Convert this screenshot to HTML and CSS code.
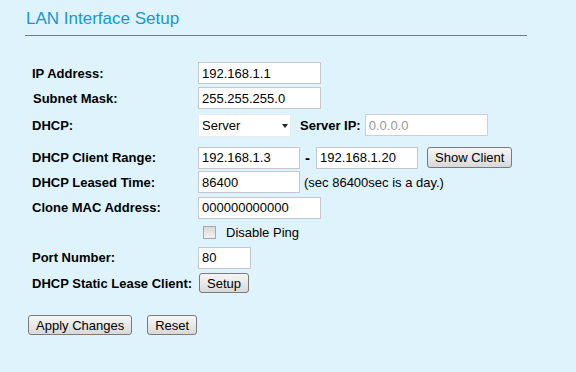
FILE: index.html
```
<!DOCTYPE html>
<html lang="en">
  <head>
    <meta charset="UTF-8" />
    <title>LAN Interface Setup</title>
    <link rel="stylesheet" href="styles.css">
  </head>
  <body>
    <h1 class="page-title">LAN Interface Setup</h1>

    <form id="lanForm">
      <table class="setup-table">
        <tr class="row-ip">
          <td class="label">IP Address:</td>
          <td><input type="text" class="field field-wide" value="192.168.1.1" /></td>
        </tr>
        <tr class="row-mask">
          <td class="label label-shift">Subnet Mask:</td>
          <td><input type="text" class="field field-wide" value="255.255.255.0" /></td>
        </tr>
        <tr class="row-dhcp">
          <td class="label">DHCP:</td>
          <td>
            <div class="inline">
              <span class="select-wrap">
                <select class="select">
                  <option>Server</option>
                  <option>Client</option>
                  <option>Disabled</option>
                </select>
              </span>
              <span class="label inline-label">Server IP:</span>
              <input type="text" class="field field-wide" value="0.0.0.0" disabled />
            </div>
          </td>
        </tr>
        <tr class="row-range">
          <td class="label">DHCP Client Range:</td>
          <td>
            <div class="inline">
              <input type="text" class="field field-mid" value="192.168.1.3" />
              <span class="dash">-</span>
              <input type="text" class="field field-mid" value="192.168.1.20" />
              <button type="button" class="btn btn-show">Show Client</button>
            </div>
          </td>
        </tr>
        <tr class="row-lease">
          <td class="label">DHCP Leased Time:</td>
          <td>
            <div class="inline">
              <input type="text" class="field field-mid" value="86400" />
              <span class="note">(sec 86400sec is a day.)</span>
            </div>
          </td>
        </tr>
        <tr class="row-mac">
          <td class="label">Clone MAC Address:</td>
          <td><input type="text" class="field field-wide" value="000000000000" /></td>
        </tr>
        <tr class="row-ping">
          <td></td>
          <td>
            <label class="check"><input type="checkbox" class="checkbox" /> Disable Ping</label>
          </td>
        </tr>
        <tr class="row-port">
          <td class="label">Port Number:</td>
          <td><input type="text" class="field field-short" value="80" /></td>
        </tr>
        <tr class="row-static">
          <td class="label">DHCP Static Lease Client:</td>
          <td><button type="button" class="btn btn-setup">Setup</button></td>
        </tr>
      </table>

      <div class="actions">
        <button type="submit" class="btn">Apply Changes</button>
        <button type="reset" class="btn">Reset</button>
      </div>
    </form>
  </body>
</html>
```

FILE: styles.css
```
* {
  box-sizing: border-box;
  margin: 0;
  padding: 0;
}

body {
  font-family: "Liberation Sans", Arial, sans-serif;
  font-size: 13px;
  color: #000;
  background-color: #dff3fc;
  padding: 9px 50px 0 25px;
}

.page-title {
  font-size: 17px;
  font-weight: normal;
  color: #1a96d4;
  padding-left: 1px;
  padding-bottom: 7px;
  border-bottom: 1px solid #6f7f89;
  width: 502px;
  line-height: 19px;
}

form {
  padding: 25px 0 0 7px;
}

.setup-table {
  border-collapse: collapse;
}

.setup-table td {
  padding: 0;
  vertical-align: middle;
}

.setup-table td:first-child {
  width: 166px;
}

.row-ip { height: 24px; }
.row-mask { height: 26px; }
.row-dhcp { height: 28px; }
.row-range { height: 30px; }
.row-range td { padding-top: 7px; }
.row-lease { height: 26px; }
.row-mac { height: 25px; }
.row-ping { height: 25px; }
.row-port { height: 25px; }
.row-static { height: 26px; }

.label {
  font-weight: bold;
  white-space: nowrap;
}

.label-shift {
  padding-left: 1px !important;
}

.inline {
  display: flex;
  align-items: center;
}

.field {
  font-family: "Liberation Sans", Arial, sans-serif;
  font-size: 13px;
  height: 22px;
  padding: 0 3px;
  border: 1px solid #c4c8cc;
  background-color: #fff;
  color: #000;
}

.field:disabled {
  color: #9a9a9a;
  background-color: #fff;
  border-color: #ccd0d3;
}

.field-wide { width: 123px; }
.field-mid { width: 102px; }
.field-short { width: 53px; }

.select-wrap {
  position: relative;
  display: inline-block;
}

.select {
  appearance: none;
  -webkit-appearance: none;
  font-family: "Liberation Sans", Arial, sans-serif;
  font-size: 13px;
  width: 93px;
  height: 23px;
  padding: 0 3px;
  border: 1px solid #e6eef2;
  background-color: #fff;
  color: #000;
}

.select-wrap::after {
  content: "";
  position: absolute;
  right: 3px;
  top: 10px;
  border-left: 3px solid transparent;
  border-right: 3px solid transparent;
  border-top: 4px solid #222;
}

.inline-label {
  margin: 0 4px 0 9px;
}

.dash {
  font-weight: bold;
  font-size: 15px;
  width: 15px;
  margin-right: 1px;
  text-align: center;
}

.note {
  margin-left: 4px;
}

.check {
  display: flex;
  align-items: center;
  padding-left: 5px;
}

.checkbox {
  appearance: none;
  -webkit-appearance: none;
  width: 13px;
  height: 13px;
  margin-right: 10px;
  border: 1px solid #a7a7a7;
  background: linear-gradient(#d9d9d9, #f2f2f2);
}

.btn {
  font-family: "Liberation Sans", Arial, sans-serif;
  font-size: 13px;
  color: #000;
  height: 20px;
  padding: 0 7px;
  border: 1px solid #7a7a7a;
  border-radius: 3px;
  background: linear-gradient(#f6f6f6 0%, #e9e9e9 50%, #d8d8d8 100%);
  cursor: pointer;
}

.btn-show {
  margin-left: 9px;
  align-self: flex-start;
  height: 21px;
}

.btn-setup {
  margin-left: 1px;
}

.actions {
  display: flex;
  gap: 15px;
  padding: 19px 0 0 2px;
  margin-left: -6px;
}
```
